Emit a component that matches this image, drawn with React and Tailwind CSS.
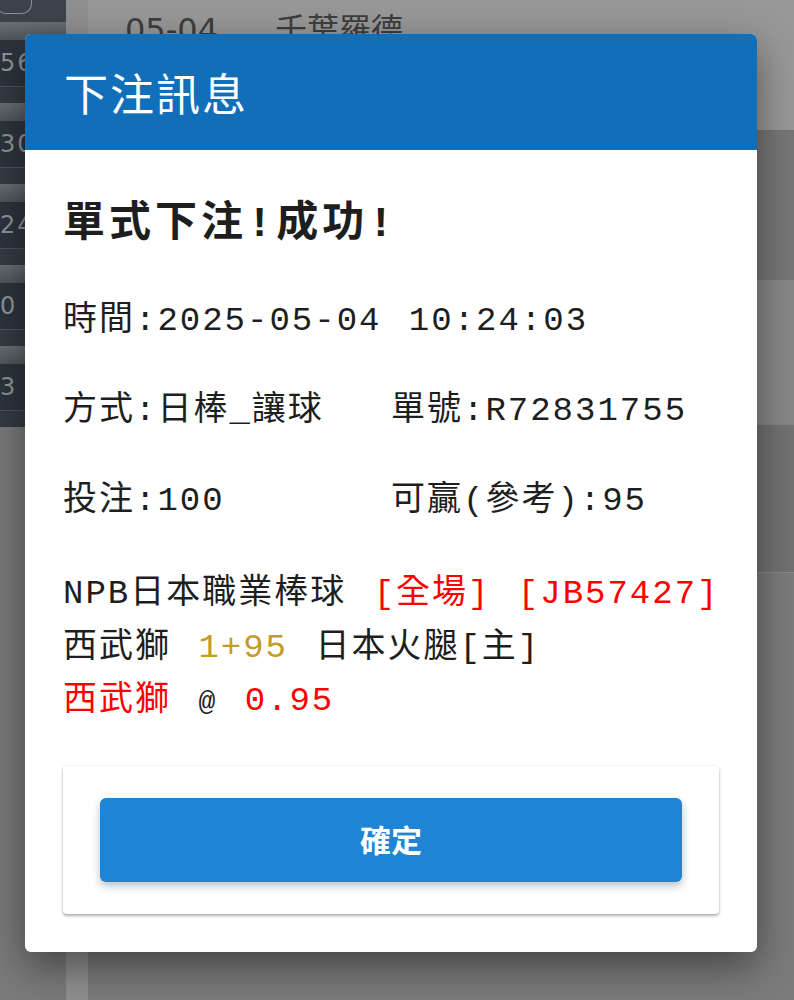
import React from "react";

const mono = "font-['Liberation_Mono','Noto_Sans_CJK_TC',monospace]";

const sideCells = [
  { t: "56", x: "ml-0" },
  { t: "30", x: "ml-0" },
  { t: "24", x: "ml-0" },
  { t: "0", x: "ml-0" },
  { t: "3", x: "ml-0" },
];

function SideColumn() {
  return (
    <div className="w-[88px] flex">
      <div className="w-[66px] flex flex-col bg-[#7a7a7a]">
        <div className="h-[22px] bg-[#3d434b] relative">
          <div className="h-[14px] w-[36px] -ml-[4px] rounded-b-[10px] border border-t-0 border-[#8a9097]"></div>
        </div>
        {sideCells.map((c, i) => (
          <div key={i} className="flex flex-col">
            <div className="h-[18px] bg-gradient-to-b from-[#6a6f76] to-[#50555c]"></div>
            <div className="h-[46px] bg-[#2d343d] flex items-center overflow-hidden">
              <span className={`${c.x} text-[24px] tracking-[2px] text-[#8e949b] font-['DejaVu_Sans',sans-serif]`}>{c.t}</span>
            </div>
            <div className="h-[17px] bg-[#353b44] border-t border-[#4d535b]"></div>
          </div>
        ))}
      </div>
      <div className="w-[22px] bg-[#8f8f8f]"></div>
    </div>
  );
}

function PageBehind() {
  return (
    <div className="flex h-full">
      <SideColumn />
      <div className="flex-1 flex flex-col">
        <div className="h-[130px] bg-[#989898] flex pl-[37px] pt-[14px] text-[32px] leading-none text-[#3e3e3e] font-['DejaVu_Sans','Noto_Sans_CJK_TC',sans-serif]">
          <span className="w-[150px]">05-04</span>
          <span>千葉羅德</span>
        </div>
        <div className="h-[150px] bg-[#767676]"></div>
        <div className="h-[145px] bg-[#878787]"></div>
        <div className="h-[147px] bg-[#727272]"></div>
        <div className="flex-1 bg-[#7b7b7b] border-t border-[#8c8c8c]"></div>
      </div>
    </div>
  );
}

export default function App() {
  return (
    <div className="relative w-[794px] h-[1000px] overflow-hidden bg-[#7b7b7b]">
      <PageBehind />

      {/* dialog */}
      <div className="absolute left-[25px] top-[34px] w-[732px] rounded-[6px] bg-white shadow-[0_14px_40px_rgba(0,0,0,0.45)] overflow-hidden">
        <div className="h-[116px] bg-[#106fb8] flex items-center px-[39px]">
          <h2 className="text-[44px] tracking-[2px] text-white font-['Noto_Sans_CJK_TC',sans-serif] leading-none">
            下注訊息
          </h2>
        </div>

        <div className={`px-[38px] pt-[50px] pb-[38px] text-[#1e1e1e] [word-spacing:5px] ${mono}`}>
          <div className="text-[42px] font-bold tracking-[4px] leading-[50px]">單式下注!成功!</div>

          <div className="mt-[46px] text-[34px] tracking-[2px] leading-[50px] flex flex-col gap-[40px]">
            <div>時間:2025-05-04 10:24:03</div>
            <div className="grid grid-cols-2">
              <div>方式:日棒_讓球</div>
              <div>單號:R72831755</div>
            </div>
            <div className="grid grid-cols-2">
              <div>投注:100</div>
              <div>可贏(參考):95</div>
            </div>
          </div>

          <div className="mt-[42px] text-[34px] tracking-[2px] leading-[53.5px] whitespace-pre">
            <div>
              NPB日本職業棒球 <span className="text-[#ff0000]">[全場]</span> <span className="text-[#ff0000]">[JB57427]</span>
            </div>
            <div>
              西武獅 <span className="text-[#c49a2a]">1+95</span> 日本火腿[主]
            </div>
            <div>
              <span className="text-[#ff0000]">西武獅</span> <span className="text-[28px]">@</span> <span className="text-[#ff0000]">0.95</span>
            </div>
          </div>

          <div className="mt-[36px] rounded-[4px] bg-white shadow-[0_2px_3px_rgba(0,0,0,0.3),0_0_3px_rgba(0,0,0,0.08)] px-[37px] py-[32px]">
            <button className="w-full h-[84px] rounded-[6px] bg-[#1f84d4] shadow-[0_4px_8px_rgba(0,0,0,0.25)] text-white font-bold text-[31px] font-['Noto_Sans_CJK_TC',sans-serif]">
              確定
            </button>
          </div>
        </div>
      </div>
    </div>
  );
}
